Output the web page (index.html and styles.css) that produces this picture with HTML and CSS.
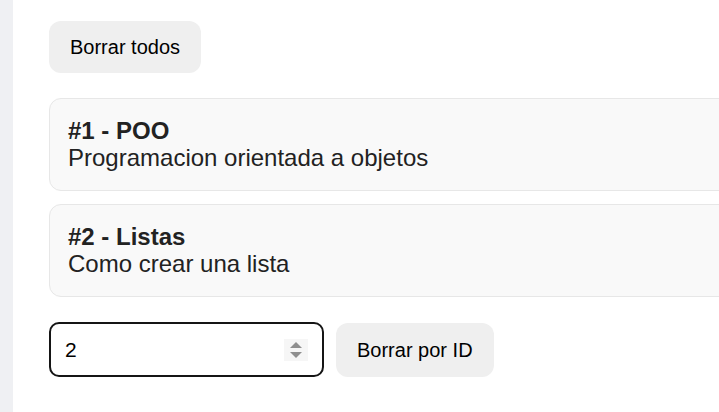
FILE: index.html
```html
<!DOCTYPE html>
<html lang="es">
<head>
<meta charset="utf-8">
<title>Cursos</title>
<link rel="stylesheet" href="styles.css">
</head>
<body>
<div class="layout">
  <aside class="sidebar"></aside>
  <main class="main">
    <button class="btn">Borrar todos</button>
    <div class="list">
      <div class="card">
        <div class="card-title">#1 - POO</div>
        <div class="card-desc">Programacion orientada a objetos</div>
      </div>
      <div class="card">
        <div class="card-title">#2 - Listas</div>
        <div class="card-desc">Como crear una lista</div>
      </div>
    </div>
    <div class="controls">
      <div class="number-field">
        <input class="number-input" type="text" value="2">
        <span class="spinner">
          <svg width="24" height="22" viewBox="0 0 24 22">
            <rect width="24" height="22" fill="#f6f6f6"/>
            <path d="M6 9 L12 3 L18 9 Z" fill="#8f8f8f"/>
            <path d="M6 13 L18 13 L12 19 Z" fill="#8f8f8f"/>
          </svg>
        </span>
      </div>
      <button class="btn">Borrar por ID</button>
    </div>
  </main>
</div>
</body>
</html>
```
FILE: styles.css
```css
html, body {
  margin: 0;
  padding: 0;
  background: #ffffff;
  font-family: "Liberation Sans", Arial, sans-serif;
  overflow: hidden;
}

.layout {
  display: flex;
  min-height: 412px;
}

.sidebar {
  width: 13px;
  flex: 0 0 13px;
  background: #eff0f3;
}

.main {
  flex: 1;
  padding: 21px 0 0 36px;
  display: flex;
  flex-direction: column;
  align-items: flex-start;
  overflow: hidden;
}

.btn {
  font-family: "Liberation Sans", Arial, sans-serif;
  font-size: 20px;
  line-height: 22px;
  color: #000;
  background: #efefef;
  border: none;
  border-radius: 12px;
  padding: 15px 21px;
  cursor: pointer;
}

.list {
  margin-top: 25px;
  width: 760px;
  display: flex;
  flex-direction: column;
  gap: 13px;
}

.card {
  background: #f9f9f9;
  border: 1px solid #e7e7e7;
  border-radius: 12px;
  padding: 18px 18px 19px;
  color: #222;
}

.card-title {
  font-size: 24px;
  line-height: 27px;
  font-weight: bold;
}

.card-desc {
  font-size: 24px;
  line-height: 27px;
}

.controls {
  margin-top: 25px;
  display: flex;
  align-items: center;
  gap: 12px;
}

.number-field {
  display: flex;
  align-items: center;
  width: 271px;
  height: 51px;
  border: 2px solid #151515;
  border-radius: 10px;
  box-sizing: content-box;
}

.number-input {
  flex: 1;
  min-width: 0;
  border: none;
  outline: none;
  background: transparent;
  font-family: "Liberation Sans", Arial, sans-serif;
  font-size: 21px;
  color: #000;
  padding: 0 0 0 14px;
}

.spinner {
  display: flex;
  margin-right: 14px;
}

.controls .btn {
  padding: 16px 21px;
}
```
